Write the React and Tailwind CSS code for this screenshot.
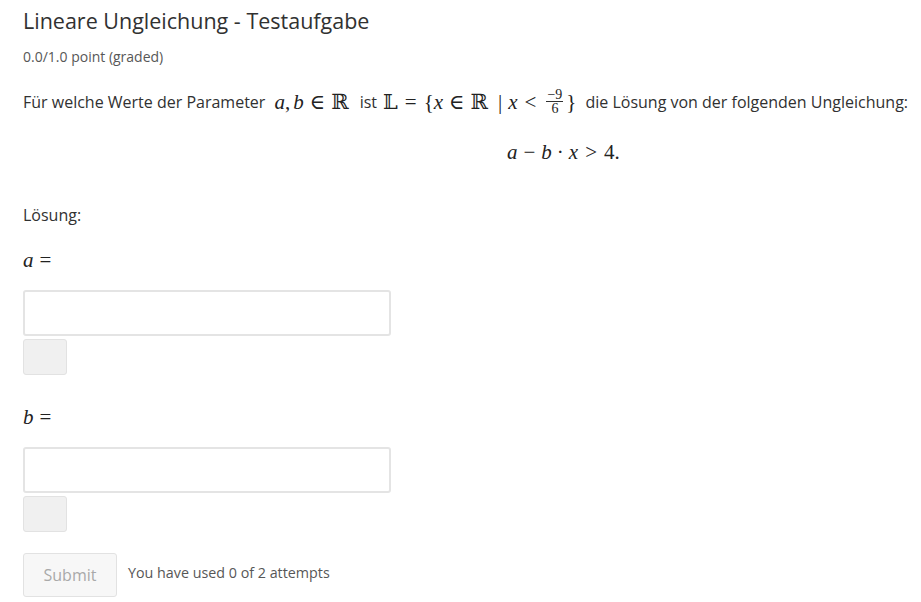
import React from "react";

const sans = { fontFamily: '"Open Sans", "Liberation Sans", sans-serif' };

const M = ({ children, className = "" }) => (
  <span
    className={"italic " + className}
    style={{ fontFamily: '"Liberation Serif", "DejaVu Serif", serif' }}
  >
    {children}
  </span>
);

const R = ({ children, className = "" }) => (
  <span
    className={className}
    style={{ fontFamily: '"Liberation Serif", "DejaVu Serif", serif' }}
  >
    {children}
  </span>
);

const Frac = ({ top, bottom }) => (
  <span className="inline-flex flex-col items-center align-middle mx-[3px] text-[14px] leading-[13px] not-italic">
    <R className="px-[1px]">{top}</R>
    <span className="block w-full h-px bg-[#313131]" />
    <R className="px-[1px]">{bottom}</R>
  </span>
);

const AnswerBlock = ({ label }) => (
  <div>
    <div className="h-[20px] flex items-center text-[21px] text-[#222]">
      <M>{label}</M>
      <R className="ml-[6px]">=</R>
    </div>
    <div className="mt-[19px] w-[368px] h-[46px] border-2 border-[#e4e4e4] rounded-[3px] bg-white" />
    <div className="mt-[3px] w-[44px] h-[36px] border border-[#e2e2e2] rounded-[3px] bg-[#f0f0f0]" />
  </div>
);

export default function App() {
  return (
    <div className="w-[921px] h-[602px] overflow-hidden bg-white text-[#313131]" style={sans}>
      <div className="pl-[23px] pt-[6px]">
        <h1 className="text-[21.5px] leading-[30px] text-[#313131] font-normal">
          Lineare Ungleichung - Testaufgabe
        </h1>
        <div className="mt-[12px] text-[14px] leading-[18px] text-[#575757]">
          0.0/1.0 point (graded)
        </div>

        <p className="mt-[22px] text-[16px] leading-[26px] whitespace-nowrap flex items-center">
          <span>Für welche Werte der Parameter</span>
          <span className="ml-[9px] text-[21px] text-[#222] flex items-center">
            <M>a</M>
            <R>,</R>
            <M className="ml-[3px]">b</M>
            <R className="mx-[6px]">∈</R>
            <R>ℝ</R>
          </span>
          <span className="ml-[11px]">ist</span>
          <span className="ml-[6px] text-[21px] text-[#222] flex items-center">
            <R>𝕃</R>
            <R className="mx-[7px]">=</R>
            <R>{"{"}</R>
            <M>x</M>
            <R className="mx-[6px]">∈</R>
            <R>ℝ</R>
            <R className="ml-[10px] mr-[6px]">|</R>
            <M>x</M>
            <R className="mx-[7px]">&lt;</R>
            <Frac top="−9" bottom="6" />
            <R>{"}"}</R>
          </span>
          <span className="ml-[9px]">die Lösung von der folgenden Ungleichung:</span>
        </p>

        <div className="mt-[24px] pl-[484px] text-[21px] leading-[26px] text-[#222] flex items-center">
          <M>a</M>
          <R className="mx-[6px]">−</R>
          <M>b</M>
          <R className="mx-[5px]">·</R>
          <M>x</M>
          <R className="mx-[7px]">&gt;</R>
          <R>4.</R>
        </div>

        <div className="mt-[38px] text-[16px] leading-[24px]">Lösung:</div>

        <div className="mt-[24px]">
          <AnswerBlock label="a" />
        </div>
        <div className="mt-[33px]">
          <AnswerBlock label="b" />
        </div>

        <div className="mt-[21px] flex items-center">
          <button
            className="w-[94px] h-[44px] border border-[#e2e2e2] rounded-[3px] bg-[#f7f7f7] text-[16px] text-[#a9a9a9]"
            style={sans}
          >
            Submit
          </button>
          <span className="ml-[11px] text-[14.3px] text-[#575757] -mt-[4px]">
            You have used 0 of 2 attempts
          </span>
        </div>
      </div>
    </div>
  );
}
